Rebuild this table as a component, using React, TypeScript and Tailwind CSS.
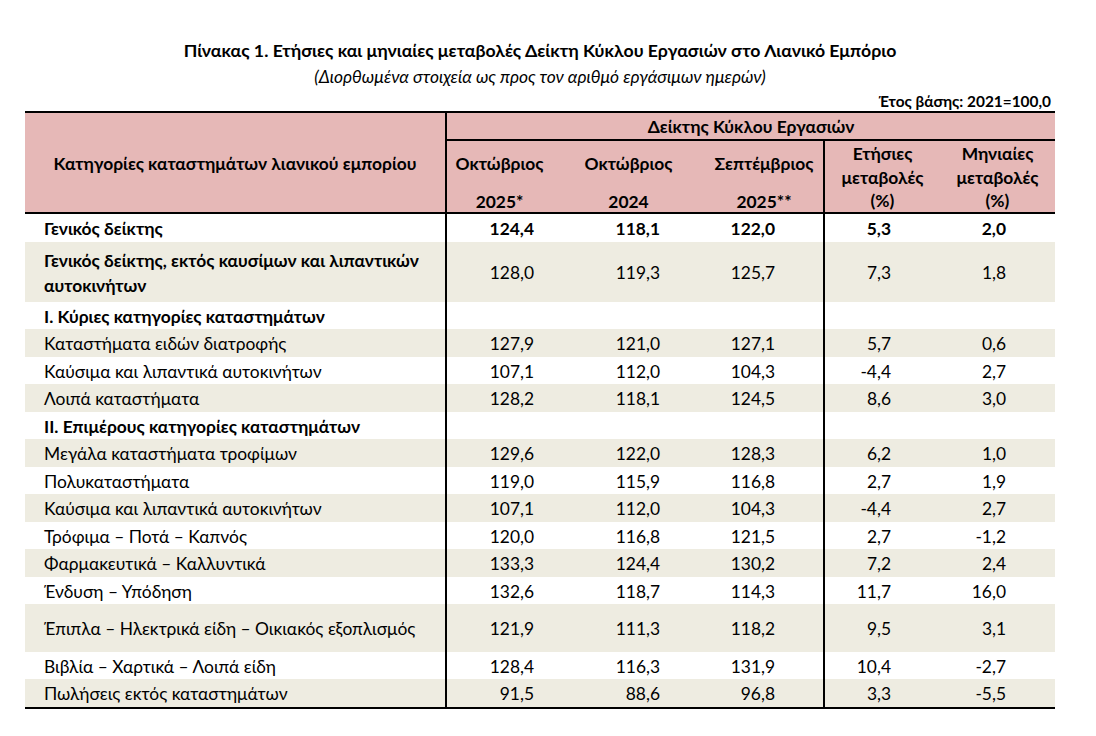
import React from "react";

type Row = {
  label: string;
  values?: string[];
  bold?: boolean;
  labelBold?: boolean;
  shaded?: boolean;
  height: string;
  twoLine?: boolean;
};

const ROWS: Row[] = [
  { label: "Γενικός δείκτης", values: ["124,4", "118,1", "122,0", "5,3", "2,0"], bold: true, labelBold: true, height: "h-[28px]" },
  { label: "Γενικός δείκτης, εκτός καυσίμων και λιπαντικών\nαυτοκινήτων", values: ["128,0", "119,3", "125,7", "7,3", "1,8"], labelBold: true, shaded: true, height: "h-[59.5px]", twoLine: true },
  { label: "I. Κύριες κατηγορίες καταστημάτων", labelBold: true, height: "h-[27.5px]" },
  { label: "Καταστήματα ειδών διατροφής", values: ["127,9", "121,0", "127,1", "5,7", "0,6"], shaded: true, height: "h-[27.5px]" },
  { label: "Καύσιμα και λιπαντικά αυτοκινήτων", values: ["107,1", "112,0", "104,3", "-4,4", "2,7"], height: "h-[27.5px]" },
  { label: "Λοιπά καταστήματα", values: ["128,2", "118,1", "124,5", "8,6", "3,0"], shaded: true, height: "h-[27.5px]" },
  { label: "II. Επιμέρους κατηγορίες καταστημάτων", labelBold: true, height: "h-[27.5px]" },
  { label: "Μεγάλα καταστήματα τροφίμων", values: ["129,6", "122,0", "128,3", "6,2", "1,0"], shaded: true, height: "h-[27.5px]" },
  { label: "Πολυκαταστήματα", values: ["119,0", "115,9", "116,8", "2,7", "1,9"], height: "h-[27.5px]" },
  { label: "Καύσιμα και λιπαντικά αυτοκινήτων", values: ["107,1", "112,0", "104,3", "-4,4", "2,7"], shaded: true, height: "h-[27.5px]" },
  { label: "Τρόφιμα – Ποτά – Καπνός", values: ["120,0", "116,8", "121,5", "2,7", "-1,2"], height: "h-[27.5px]" },
  { label: "Φαρμακευτικά – Καλλυντικά", values: ["133,3", "124,4", "130,2", "7,2", "2,4"], shaded: true, height: "h-[27.5px]" },
  { label: "Ένδυση – Υπόδηση", values: ["132,6", "118,7", "114,3", "11,7", "16,0"], height: "h-[27.5px]" },
  { label: "Έπιπλα – Ηλεκτρικά είδη – Οικιακός εξοπλισμός", values: ["121,9", "111,3", "118,2", "9,5", "3,1"], shaded: true, height: "h-[47.5px]" },
  { label: "Βιβλία – Χαρτικά – Λοιπά είδη", values: ["128,4", "116,3", "131,9", "10,4", "-2,7"], height: "h-[27.5px]" },
  { label: "Πωλήσεις εκτός καταστημάτων", values: ["91,5", "88,6", "96,8", "3,3", "-5,5"], shaded: true, height: "h-[27.5px]" },
];

// right padding per value column so the figures line up like the sheet
const VALUE_CELL = [
  "pr-[18px]",
  "pr-[45px]",
  "pr-[48px] border-r-2 border-black",
  "pr-[49px]",
  "pr-[49px]",
];

function BodyRow({ row }: { row: Row }) {
  return (
    <div
      className={`grid grid-cols-[422px_105px_153px_120px_115px_115px] ${row.height} ${
        row.shaded ? "bg-[#eeece1]" : "bg-white"
      }`}
    >
      <div
        className={`flex items-center pt-[2px] pl-[19px] border-r-2 border-black whitespace-pre overflow-visible ${
          row.labelBold ? "font-bold" : ""
        } ${row.twoLine ? "leading-[25px]" : ""}`}
      >
        {row.label}
      </div>
      {VALUE_CELL.map((cls, i) => (
        <div
          key={i}
          className={`flex items-center justify-end pt-[2px] ${cls} ${row.bold ? "font-bold" : ""}`}
        >
          {row.values ? row.values[i] : ""}
        </div>
      ))}
    </div>
  );
}

export default function App() {
  return (
    <div className="w-[1096px] h-[736px] bg-white text-black font-['Lato','Open_Sans','Noto_Sans',sans-serif] text-[17.4px]">
      <div className="w-[1030px] ml-[25px] pt-[40px]">
        <div className="text-center font-bold text-[17.7px] leading-[22px]">
          Πίνακας 1. Ετήσιες και μηνιαίες μεταβολές Δείκτη Κύκλου Εργασιών στο Λιανικό Εμπόριο
        </div>
        <div className="mt-[4px] text-center italic text-[17.4px] leading-[22px]">
          (Διορθωμένα στοιχεία ως προς τον αριθμό εργάσιμων ημερών)
        </div>
        <div className="mt-[3px] text-right pr-[4px] font-bold text-[15.4px] leading-[20px]">
          Έτος βάσης: 2021=100,0
        </div>

        <div className="border-t-2 border-b-2 border-black">
          {/* header */}
          <div className="flex bg-[#e6b8b7] font-bold border-b-2 border-black">
            <div className="w-[422px] border-r-2 border-black flex items-center justify-center pt-[4px]">
              Κατηγορίες καταστημάτων λιανικού εμπορίου
            </div>
            <div className="w-[608px] flex flex-col">
              <div className="h-[28px] border-b-2 border-black flex items-center justify-center pt-[2px]">
                Δείκτης Κύκλου Εργασιών
              </div>
              <div className="h-[71px] grid grid-cols-[105px_153px_120px_115px_115px]">
                <div className="flex flex-col items-center pt-[11px] gap-[15px] leading-[23px]">
                  <span>Οκτώβριος</span>
                  <span>2025*</span>
                </div>
                <div className="flex flex-col items-center pt-[11px] gap-[15px] leading-[23px]">
                  <span>Οκτώβριος</span>
                  <span>2024</span>
                </div>
                <div className="flex flex-col items-center pt-[11px] gap-[15px] leading-[23px] border-r-2 border-black">
                  <span>Σεπτέμβριος</span>
                  <span>2025**</span>
                </div>
                <div className="flex flex-col items-center pt-[1px] leading-[23.5px]">
                  <span>Ετήσιες</span>
                  <span>μεταβολές</span>
                  <span>(%)</span>
                </div>
                <div className="flex flex-col items-center pt-[1px] leading-[23.5px]">
                  <span>Μηνιαίες</span>
                  <span>μεταβολές</span>
                  <span>(%)</span>
                </div>
              </div>
            </div>
          </div>

          {/* body */}
          {ROWS.map((row, i) => (
            <BodyRow key={i} row={row} />
          ))}
        </div>
      </div>
    </div>
  );
}
